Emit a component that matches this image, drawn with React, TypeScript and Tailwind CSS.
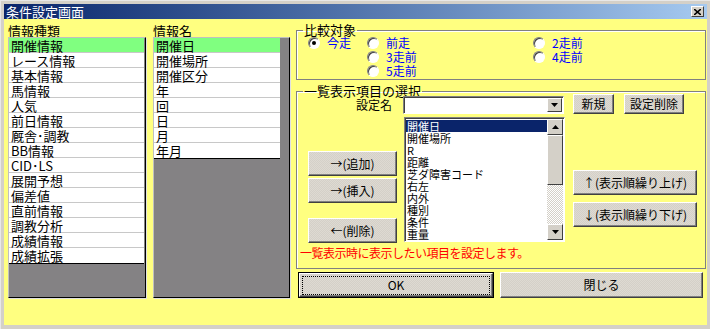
import type { ReactNode } from 'react'

const kinds = [
  '開催情報', 'レース情報', '基本情報', '馬情報', '人気', '前日情報', '厩舎･調教', 'BB情報',
  'CID･LS', '展開予想', '偏差値', '直前情報', '調教分析', '成績情報', '成績拡張',
]
const names = ['開催日', '開催場所', '開催区分', '年', '回', '日', '月', '年月']
const columns = ['開催日', '開催場所', 'R', '距離', '芝ダ障害コード', '右左', '内外', '種別', '条件', '重量']

function Btn({ children, className = '' }: { children: ReactNode; className?: string }) {
  return (
    <div
      className={`flex items-center justify-center border border-t-white border-l-white border-r-[#404040] border-b-[#404040] bg-[#d4d0c8] bg-[repeating-conic-gradient(#d4d0c8_0_25%,#dedad2_0_50%)] bg-[length:2px_2px] text-[12px] leading-[12px] text-black shadow-[inset_-1px_-1px_0_#808080] ${className}`}
    >
      {children}
    </div>
  )
}

function Radio({ label, checked }: { label: string; checked?: boolean }) {
  return (
    <div className="flex h-[14px] items-center">
      <span className="flex h-[12px] w-[12px] items-center justify-center rounded-full border border-t-[#808080] border-l-[#808080] border-r-white border-b-white bg-white shadow-[inset_1px_1px_0_#404040]">
        {checked && <span className="h-[4px] w-[4px] rounded-full bg-black" />}
      </span>
      <span className="ml-[7px] text-[12px] leading-[14px] text-[#0000ff]">{label}</span>
    </div>
  )
}

function Arrow({ up }: { up?: boolean }) {
  return (
    <svg width="7" height="4" viewBox="0 0 7 4">
      <path d={up ? 'M3.5 0 L7 4 L0 4 Z' : 'M0 0 L7 0 L3.5 4 Z'} fill="#000" />
    </svg>
  )
}

function GridList({ label, items, width, rowWidth }: { label: string; items: string[]; width: string; rowWidth: string }) {
  return (
    <div className={`flex flex-col ${width}`}>
      <div className="h-[13px] text-[13px] leading-[13px]">{label}</div>
      <div className="h-[261px] border border-t-[#c0c0c0] border-l-[#c0c0c0] border-r-black border-b-black bg-[#848284] shadow-[1px_1px_0_#e0e0e0]">
        <div className={`flex flex-col ${rowWidth} border-b border-black`}>
          {items.map((it, i) => (
            <div
              key={it}
              className={`h-[15px] border-b border-[#c8c8c8] pl-[2px] text-[13px] leading-[15px] last:border-b-0 ${i === 0 ? 'bg-[#80ff80]' : 'bg-white'}`}
            >
              {it}
            </div>
          ))}
        </div>
      </div>
    </div>
  )
}

export default function App() {
  return (
    <div className="flex h-[329px] w-[710px] flex-col border-t border-l border-t-[#e8e8e8] border-l-[#e8e8e8] bg-[#d4d0c8] px-[3px] pt-[3px] pb-[4px] font-['Noto_Sans_CJK_JP','Noto_Sans',sans-serif] text-black">
      {/* title bar */}
      <div className="flex h-[15px] items-center justify-between bg-gradient-to-r from-[#0a246a] to-[#a6caf0] pl-[2px] pr-[3px]">
        <span className="text-[13px] leading-[15px] text-white">条件設定画面</span>
        <div className="flex h-[11px] w-[13px] items-center justify-center border border-t-white border-l-white border-r-[#404040] border-b-[#404040] bg-[#d4d0c8]">
          <svg width="7" height="6" viewBox="0 0 7 6">
            <path d="M0 0 L7 6 M7 0 L0 6" stroke="#000" strokeWidth="1.6" />
          </svg>
        </div>
      </div>

      {/* client */}
      <div className="flex flex-1 bg-[#ffff80] pt-[5px] pl-[4px]">
        <GridList label="情報種類" items={kinds} width="w-[138px]" rowWidth="w-[135px]" />
        <div className="w-[7px]" />
        <GridList label="情報名" items={names} width="w-[137px]" rowWidth="w-[126px]" />

        <div className="ml-[6px] flex w-[410px] flex-col">
          {/* 比較対象 */}
          <fieldset className="h-[56px] border border-[#808080] shadow-[inset_1px_1px_0_#fff]">
            <legend className="ml-[6px] px-[1px] text-[13px] leading-[12px]">比較対象</legend>
            <div className="flex pl-[11px]">
              <div className="w-[59px]">
                <Radio label="今走" checked />
              </div>
              <div className="flex w-[166px] flex-col">
                <Radio label="前走" />
                <Radio label="3走前" />
                <Radio label="5走前" />
              </div>
              <div className="flex flex-col">
                <Radio label="2走前" />
                <Radio label="4走前" />
              </div>
            </div>
          </fieldset>

          {/* 一覧表示項目の選択 */}
          <fieldset className="mt-[5px] h-[184px] border border-[#808080] shadow-[inset_1px_1px_0_#fff]">
            <legend className="ml-[6px] px-[1px] text-[13px] leading-[12px]">一覧表示項目の選択</legend>
            <div className="-mt-[3px] flex h-[20px] items-start">
              <div className="w-[106px] pr-[11px] pt-[5px] text-right text-[12px] leading-[12px]">設定名</div>
              <div className="mt-[2px] flex h-[18px] w-[161px] items-center justify-end border border-t-[#808080] border-l-[#808080] border-r-white border-b-white bg-white pr-[1px] shadow-[inset_1px_1px_0_#404040]">
                <div className="flex h-[14px] w-[15px] items-center justify-center border border-t-white border-l-white border-r-[#404040] border-b-[#404040] bg-[#d4d0c8]">
                  <Arrow />
                </div>
              </div>
              <Btn className="ml-[9px] h-[20px] w-[41px]">新規</Btn>
              <Btn className="ml-[10px] h-[20px] w-[60px]">設定削除</Btn>
            </div>

            <div className="mt-[3px] flex">
              <div className="ml-[11px] flex w-[89px] flex-col pt-[34px]">
                <Btn className="h-[25px]">→(追加)</Btn>
                <Btn className="mt-[2px] h-[25px]">→(挿入)</Btn>
                <Btn className="mt-[15px] h-[25px]">←(削除)</Btn>
              </div>

              <div className="ml-[7px] flex h-[125px] w-[161px] border border-t-[#808080] border-l-[#808080] border-r-white border-b-white bg-white p-[1px] shadow-[inset_1px_1px_0_#404040]">
                <div className="flex flex-1 flex-col overflow-hidden pt-[1px]">
                  {columns.map((c, i) => (
                    <div
                      key={c}
                      className={`h-[12px] pl-[1px] text-[11px] leading-[12px] ${i === 0 ? 'bg-[#0a246a] text-white' : ''}`}
                    >
                      {c}
                    </div>
                  ))}
                </div>
                <div className="flex w-[16px] flex-col">
                  <div className="flex h-[16px] items-center justify-center border border-t-white border-l-white border-r-[#404040] border-b-[#404040] bg-[#d4d0c8]">
                    <Arrow up />
                  </div>
                  <div className="h-[50px] border border-t-white border-l-white border-r-[#404040] border-b-[#404040] bg-[#d4d0c8]" />
                  <div className="flex-1 bg-[repeating-conic-gradient(#d4d0c8_0_25%,#fff_0_50%)] bg-[length:2px_2px]" />
                  <div className="flex h-[16px] items-center justify-center border border-t-white border-l-white border-r-[#404040] border-b-[#404040] bg-[#d4d0c8]">
                    <Arrow />
                  </div>
                </div>
              </div>

              <div className="ml-[8px] flex w-[124px] flex-col pt-[53px]">
                <Btn className="h-[25px]">↑(表示順繰り上げ)</Btn>
                <Btn className="mt-[7px] h-[25px]">↓(表示順繰り下げ)</Btn>
              </div>
            </div>

            <div className="ml-[3px] mt-[3px] text-[12px] leading-[13px] tracking-[-0.5px] text-[#ff0000]">
              一覧表示時に表示したい項目を設定します。
            </div>
          </fieldset>

          <div className="mt-[3px] flex">
            <div className="ml-[2px] h-[26px] w-[196px] border border-black">
              <Btn className="h-full w-full">
                <span className="flex h-[17px] w-[186px] items-center justify-center outline-1 outline-dotted outline-black">
                  OK
                </span>
              </Btn>
            </div>
            <Btn className="ml-[6px] h-[26px] w-[203px]">閉じる</Btn>
          </div>
        </div>
      </div>
    </div>
  )
}
